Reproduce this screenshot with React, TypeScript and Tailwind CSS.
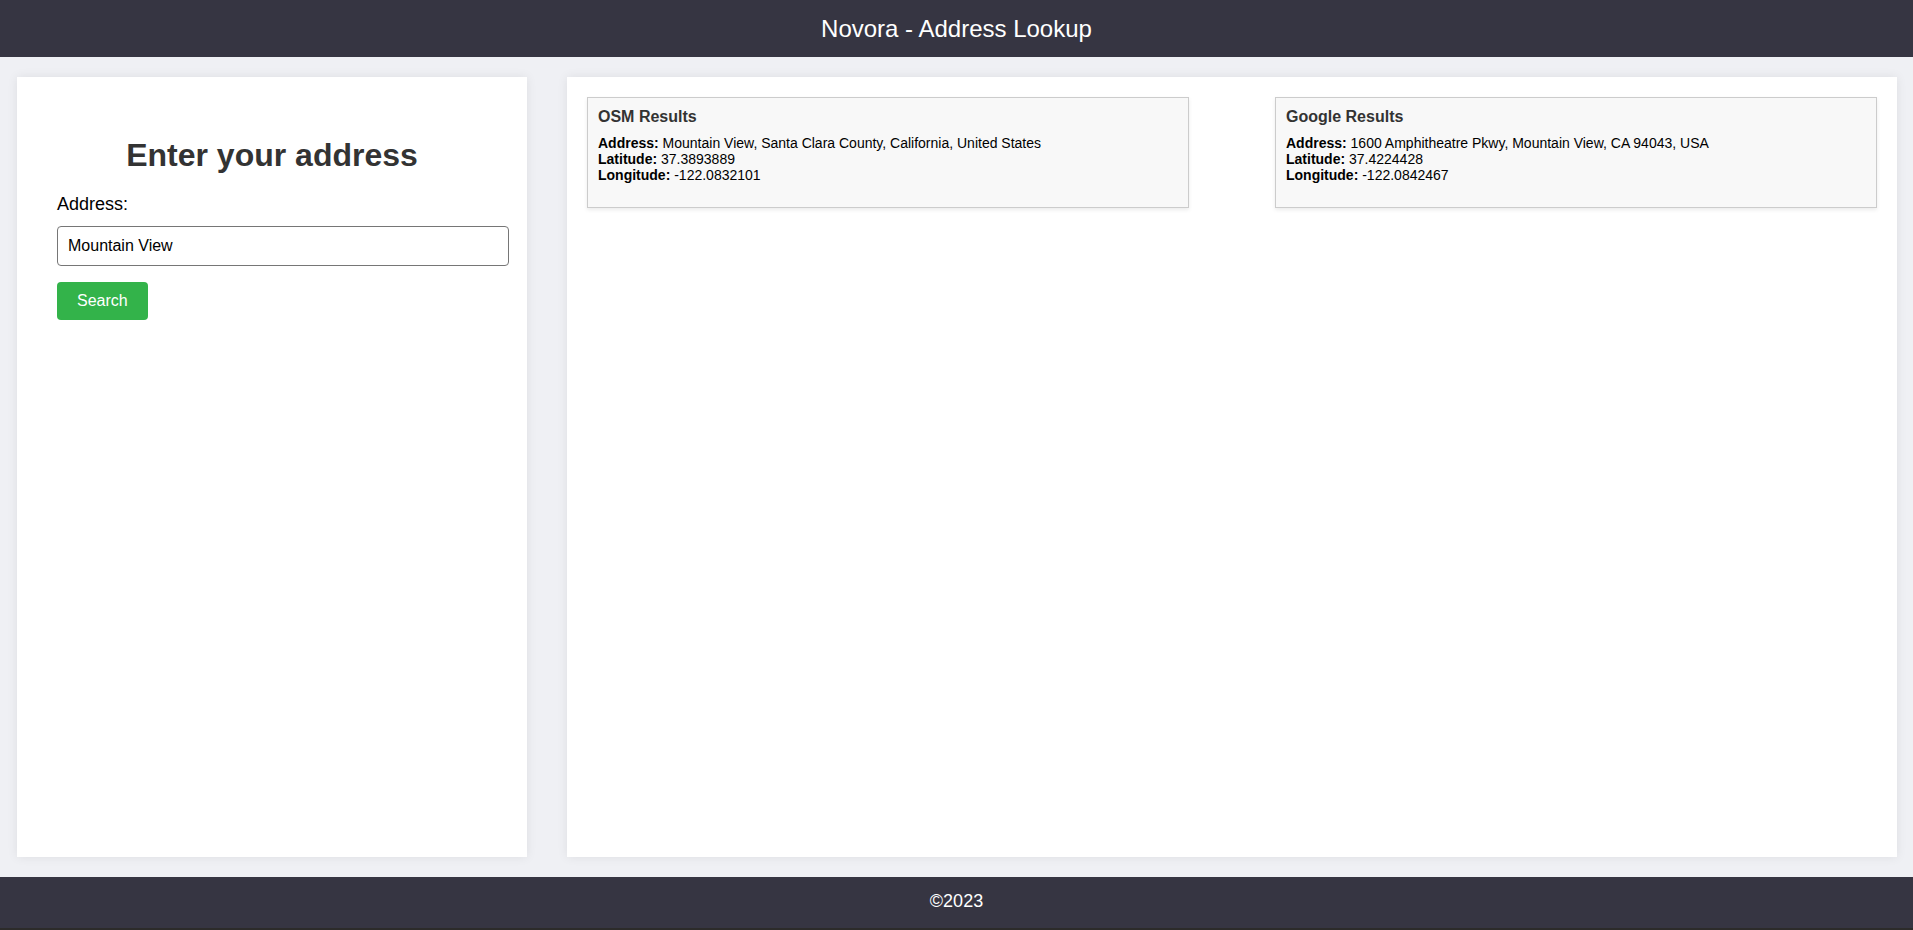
import React, { useState } from 'react';

type Result = {
  title: string;
  address: string;
  latitude: string;
  longitude: string;
};

const results: Result[] = [
  {
    title: 'OSM Results',
    address: 'Mountain View, Santa Clara County, California, United States',
    latitude: '37.3893889',
    longitude: '-122.0832101',
  },
  {
    title: 'Google Results',
    address: '1600 Amphitheatre Pkwy, Mountain View, CA 94043, USA',
    latitude: '37.4224428',
    longitude: '-122.0842467',
  },
];

const ResultBox = ({ result }: { result: Result }) => (
  <div className="w-[602px] border border-[#cccccc] bg-[#f8f8f8] p-[10px] shadow-[0_2px_4px_rgba(0,0,0,0.08)]">
    <h3 className="text-[16px] leading-[18px] font-bold text-[#333333]">{result.title}</h3>
    <div className="mt-[9px] mb-[14px] text-[14px] leading-[16px] text-black">
      <div>
        <span className="font-bold">Address:</span> {result.address}
      </div>
      <div>
        <span className="font-bold">Latitude:</span> {result.latitude}
      </div>
      <div>
        <span className="font-bold">Longitude:</span> {result.longitude}
      </div>
    </div>
  </div>
);

const App = () => {
  const [address, setAddress] = useState('Mountain View');

  return (
    <div className="flex h-[930px] flex-col bg-[#eff0f4] font-['Liberation_Sans',Arial,sans-serif]">
      <header className="flex h-[57px] shrink-0 items-center justify-center bg-[#363542]">
        <h1 className="text-[24px] leading-[28px] text-white">Novora - Address Lookup</h1>
      </header>

      <main className="flex flex-1 gap-[40px] pt-[20px] pb-[20px] pl-[17px] pr-[16px]">
        <section className="w-[510px] shrink-0 bg-white px-[40px] pt-[40px] shadow-[0_0_10px_rgba(0,0,0,0.08)]">
          <h2 className="mt-[20px] mb-[20px] text-center text-[32px] leading-[37px] font-bold text-[#333333]">
            Enter your address
          </h2>
          <label className="block text-[18px] leading-[21px] text-black">Address:</label>
          <input
            value={address}
            onChange={(e) => setAddress(e.target.value)}
            className="mt-[11px] block h-[40px] w-[452px] rounded-[4px] border border-[#767676] bg-white px-[10px] text-[16px] text-black outline-none"
          />
          <button className="mt-[16px] rounded-[4px] bg-[#33b34a] px-[20px] py-[10px] text-[16px] leading-[18px] text-white">
            Search
          </button>
        </section>

        <section className="flex flex-1 items-start justify-between bg-white p-[20px] shadow-[0_0_10px_rgba(0,0,0,0.08)]">
          {results.map((r) => (
            <ResultBox key={r.title} result={r} />
          ))}
        </section>
      </main>

      <footer className="h-[53px] shrink-0 border-b-[2px] border-[#2c2b2a] bg-[#363542] pt-[14px] text-center text-[18px] leading-[21px] text-white">
        ©2023
      </footer>
    </div>
  );
};

export default App;
